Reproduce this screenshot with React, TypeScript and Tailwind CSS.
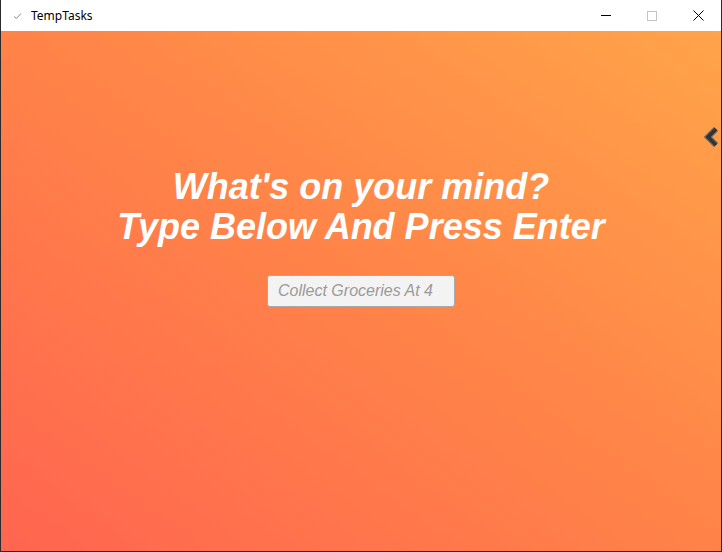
import { useState } from 'react';

const App = () => {
    const [task, setTask] = useState('');

    return (
        <div className="w-[722px] h-[552px] flex flex-col border border-[#2b2b2b] border-t-0 bg-white overflow-hidden"
            style={{ fontFamily: '"Liberation Sans", Arial, sans-serif' }}>
            {/* Title bar */}
            <div className="h-[31px] flex items-center bg-white shrink-0">
                <div className="w-[30px] flex justify-center pl-[2px]">
                    <svg width="9" height="8" viewBox="0 0 9 8">
                        <path d="M1 4.5 L3.4 6.5 L8 1.5" stroke="#8a8a8a" strokeWidth="1" fill="none" />
                    </svg>
                </div>
                <span className="text-[12px] text-black" style={{ fontFamily: '"Segoe UI", "Noto Sans", sans-serif' }}>TempTasks</span>
                <div className="ml-auto flex h-full">
                    <div className="w-[46px] flex items-center justify-center">
                        <div className="w-[10px] h-px bg-black" />
                    </div>
                    <div className="w-[46px] flex items-center justify-center">
                        <div className="w-[10px] h-[10px] border border-[#c4c4c4]" />
                    </div>
                    <div className="w-[46px] flex items-center justify-center">
                        <svg width="11" height="11" viewBox="0 0 11 11">
                            <path d="M0.5 0.5 L10.5 10.5 M10.5 0.5 L0.5 10.5" stroke="#000" strokeWidth="1" />
                        </svg>
                    </div>
                </div>
            </div>

            {/* Content */}
            <div className="relative flex-1 bg-[linear-gradient(to_top_right,#ff6550,#ff8648_55%,#ffa44a)]">
                <button className="absolute right-0 top-[95px] w-[18px] h-[22px] flex items-center justify-center">
                    <svg width="16" height="20" viewBox="0 0 16 20">
                        <path d="M12 2 L4 10 L12 18" stroke="#6b6b6b" strokeWidth="6" fill="none" strokeLinejoin="miter" />
                        <path d="M12 2 L4 10 L12 18" stroke="#333" strokeWidth="3.6" fill="none" strokeLinejoin="miter" />
                    </svg>
                </button>

                <div className="flex flex-col items-center pt-[136px]">
                    <h1 className="text-white text-[36px] leading-[40px] font-bold italic text-center">
                        What's on your mind?<br />Type Below And Press Enter
                    </h1>
                    <input
                        autoFocus
                        value={task}
                        onChange={(e) => setTask(e.target.value)}
                        placeholder="Collect Groceries At 4"
                        className="mt-[28px] w-[188px] h-[32px] px-[10px] rounded-[3px] border border-[#a9a9a9] bg-[#f3f3f3] text-[16px] italic text-[#333] placeholder:text-[#9a9a9a] outline-none caret-black"
                    />
                </div>
            </div>
        </div>
    );
};

export default App;
